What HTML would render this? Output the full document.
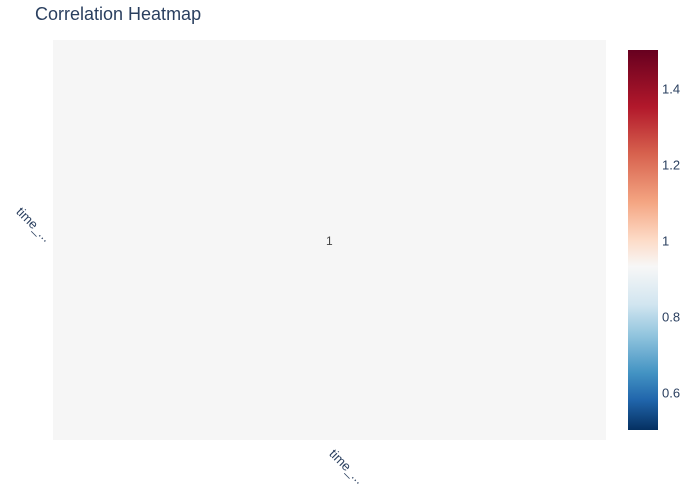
<!DOCTYPE html>
<html><head><style>
body{margin:0;width:700px;height:500px;background:#fff;position:relative;overflow:hidden;font-family:"Liberation Sans","DejaVu Sans",sans-serif;color:#2a3f5f}
.t{position:absolute;left:35px;top:4px;font-size:18px}
.plot{position:absolute;left:53px;top:40px;width:553px;height:400px;background:#f6f6f6}
.cb{position:absolute;left:628px;top:50px;width:30px;height:380px;background:linear-gradient(to bottom,#67001f,#b2182b 15%,#d6604d 27%,#f4a582 40%,#fddbc7 50%,#f7f7f7 57%,#d1e5f0 67%,#92c5de 75%,#4393c3 85%,#2166ac 92%,#053061)}
.tk{position:absolute;left:662px;font-size:13px;transform:translateY(-50%)}
.lab{position:absolute;font-size:13px;transform:rotate(45deg);transform-origin:left top;white-space:nowrap}
</style></head><body>
<div class="t">Correlation Heatmap</div>
<div class="plot"></div>
<div style="position:absolute;left:326px;top:234px;font-size:12px;color:#444">1</div>
<div class="cb"></div>
<div class="tk" style="top:89px">1.4</div>
<div class="tk" style="top:165px">1.2</div>
<div class="tk" style="top:241px">1</div>
<div class="tk" style="top:317px">0.8</div>
<div class="tk" style="top:393px">0.6</div>
<div class="lab" style="left:24px;top:204px">time_...</div>
<div class="lab" style="left:337px;top:446px">time_...</div>
</body></html>
